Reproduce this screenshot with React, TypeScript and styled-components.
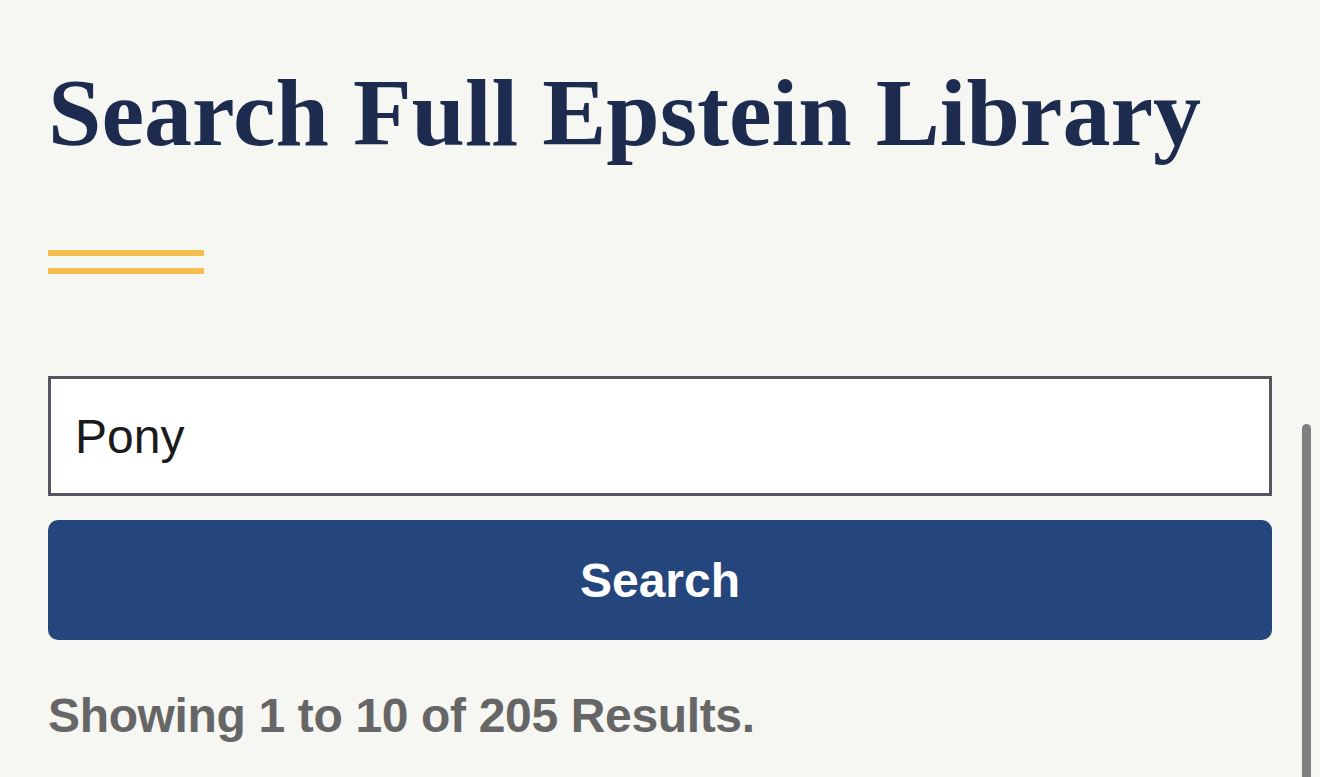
import React, { useState } from "react";
import styled, { createGlobalStyle } from "styled-components";

const GlobalStyle = createGlobalStyle`
  html, body {
    margin: 0;
    padding: 0;
    background: #f6f6f2;
    overflow: hidden;
  }
  * {
    box-sizing: border-box;
  }
`;

const Page = styled.main`
  position: relative;
  width: 1320px;
  height: 777px;
  padding: 55px 48px 0;
  background: #f6f6f2;
  font-family: "Liberation Sans", Arial, sans-serif;
  overflow: hidden;
`;

const Title = styled.h1`
  margin: 0;
  font-family: "Liberation Serif", "Times New Roman", serif;
  font-size: 96px;
  line-height: 115px;
  font-weight: 700;
  color: #1c2b4e;
  white-space: nowrap;
`;

const Accent = styled.div`
  width: 156px;
  height: 24px;
  margin-top: 80px;
  border-top: 6px solid #f5bf50;
  border-bottom: 6px solid #f5bf50;
`;

const SearchForm = styled.form`
  display: flex;
  flex-direction: column;
  gap: 24px;
  margin-top: 102px;
`;

const SearchInput = styled.input`
  width: 100%;
  height: 120px;
  padding: 0 24px;
  border: 3px solid #55575e;
  border-radius: 0;
  background: #ffffff;
  font-family: "Liberation Sans", Arial, sans-serif;
  font-size: 48px;
  color: #1b1b1b;
  outline: none;
`;

const SearchButton = styled.button`
  width: 100%;
  height: 120px;
  border: none;
  border-radius: 10px;
  background: #25457d;
  color: #ffffff;
  font-family: "Liberation Sans", Arial, sans-serif;
  font-size: 48px;
  font-weight: 700;
  cursor: pointer;
`;

const ResultCount = styled.p`
  margin: 40px 0 0;
  font-size: 48px;
  line-height: 72px;
  font-weight: 700;
  letter-spacing: -0.35px;
  color: #666666;
`;

// overlay scroll indicator, sits on top of the page edge
const ScrollThumb = styled.div`
  position: absolute;
  right: 9px;
  top: 424px;
  bottom: 0;
  width: 9px;
  border-radius: 5px 5px 0 0;
  background: #808080;
`;

const App: React.FC = () => {
  const [query, setQuery] = useState("Pony");

  return (
    <>
      <GlobalStyle />
      <Page>
        <Title>Search Full Epstein Library</Title>
        <Accent />
        <SearchForm onSubmit={(e) => e.preventDefault()}>
          <SearchInput
            type="text"
            value={query}
            onChange={(e) => setQuery(e.target.value)}
          />
          <SearchButton type="submit">Search</SearchButton>
        </SearchForm>
        <ResultCount>Showing 1 to 10 of 205 Results.</ResultCount>
        <ScrollThumb />
      </Page>
    </>
  );
};

export default App;
